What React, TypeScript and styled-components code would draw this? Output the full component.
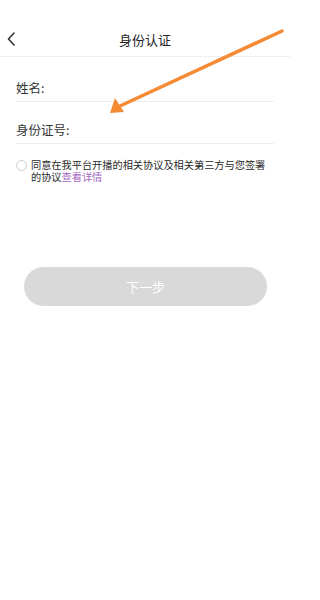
import styled, { createGlobalStyle } from "styled-components";

const GlobalStyle = createGlobalStyle`
  html, body {
    margin: 0;
    padding: 0;
    background: #ffffff;
  }
  body {
    font-family: "Noto Sans CJK SC", "Noto Sans", sans-serif;
  }
  * {
    box-sizing: border-box;
  }
`;

const Page = styled.div`
  position: relative;
  width: 290px;
  height: 600px;
  background: #ffffff;
  overflow: hidden;
`;

const Header = styled.div`
  margin-top: 22px;
  height: 35px;
  display: flex;
  align-items: center;
  justify-content: center;
  position: relative;
  border-bottom: 1px solid #efefef;
`;

const BackButton = styled.div`
  position: absolute;
  left: 5px;
  top: 10px;
  width: 12px;
  height: 14px;
  display: flex;
  align-items: center;
  justify-content: center;
`;

const Title = styled.h1`
  margin: 0;
  font-size: 13px;
  font-weight: 400;
  color: #222222;
`;

const Form = styled.div`
  padding: 0 16px;
  display: flex;
  flex-direction: column;
`;

const Field = styled.div<{ $top: number }>`
  margin-top: ${(p) => p.$top}px;
  height: 28px;
  width: 258px;
  display: flex;
  align-items: center;
  border-bottom: 1px solid #eeeeee;
`;

const Label = styled.span`
  font-size: 12.5px;
  color: #333333;
`;

const Agreement = styled.div`
  display: flex;
  align-items: flex-start;
  gap: 4px;
  padding: 0 0 0 16px;
  margin-top: 15px;
`;

const Radio = styled.span`
  flex: none;
  width: 11px;
  height: 11px;
  margin-top: 1px;
  border-radius: 50%;
  border: 1px solid #cccccc;
`;

const AgreementText = styled.p`
  margin: 0;
  font-size: 10.2px;
  line-height: 12px;
  color: #2a2a2a;
  width: 240px;
`;

const Link = styled.span`
  color: #a468c4;
`;

const NextButton = styled.button`
  display: flex;
  align-items: center;
  justify-content: center;
  margin: 84px 0 0 24px;
  width: 243px;
  height: 39px;
  border: none;
  border-radius: 20px;
  background: #d9d9d9;
  color: #ffffff;
  font-family: "Noto Sans CJK SC", "Noto Sans", sans-serif;
  font-size: 13px;
`;

const Annotation = styled.svg`
  position: absolute;
  left: 0;
  top: 0;
  pointer-events: none;
`;

export default function App() {
  return (
    <>
      <GlobalStyle />
      <Page>
        <Header>
          <BackButton>
            <svg width="8" height="14" viewBox="0 0 8 14">
              <path
                d="M7 1 L1.5 7 L7 13"
                fill="none"
                stroke="#333"
                strokeWidth="1.6"
                strokeLinecap="round"
                strokeLinejoin="round"
              />
            </svg>
          </BackButton>
          <Title>身份认证</Title>
        </Header>

        <Form>
          <Field $top={17}>
            <Label>姓名:</Label>
          </Field>
          <Field $top={14}>
            <Label>身份证号:</Label>
          </Field>
        </Form>

        <Agreement>
          <Radio />
          <AgreementText>
            同意在我平台开播的相关协议及相关第三方与您签署的协议
            <Link>查看详情</Link>
          </AgreementText>
        </Agreement>

        <NextButton>下一步</NextButton>

        <Annotation width="290" height="600" viewBox="0 0 290 600">
          <line
            x1="282"
            y1="31"
            x2="120"
            y2="106"
            stroke="#f68b36"
            strokeWidth="3.5"
            strokeLinecap="round"
          />
          <polygon points="110,113 115,98 124,112" fill="#f68b36" />
        </Annotation>
      </Page>
    </>
  );
}
